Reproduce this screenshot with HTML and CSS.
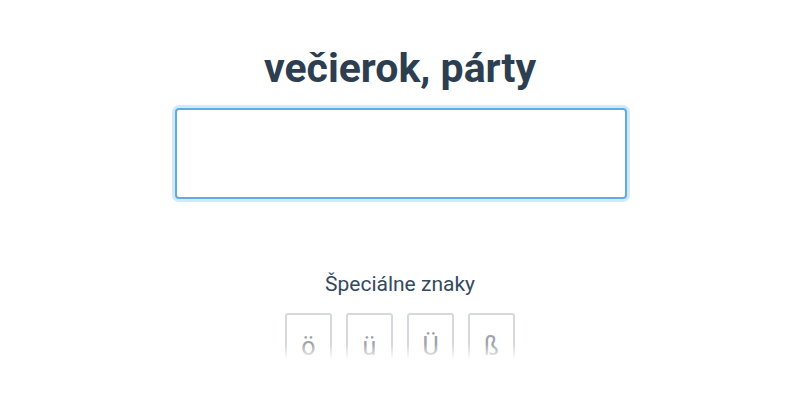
FILE: index.html
```html
<!DOCTYPE html>
<html lang="sk">
    <head>
        <meta charset="UTF-8" />
        <meta name="viewport" content="width=device-width, initial-scale=1.0" />
        <title>večierok, párty</title>
        <link rel="stylesheet" href="styles.css">
    </head>
    <body>
        <main class="quiz">
            <h1 class="word">večierok, párty</h1>
            <div class="answer">
                <input class="answer-input" type="text" autofocus />
            </div>
            <div class="special">
                <div class="special-title">Špeciálne znaky</div>
                <div class="keys">
                    <button class="key">ö</button>
                    <button class="key">ü</button>
                    <button class="key">Ü</button>
                    <button class="key">ß</button>
                </div>
            </div>
        </main>
        <div class="fade"></div>
    </body>
</html>
```

FILE: styles.css
```css
html, body {
    margin: 0;
    height: 100%;
    overflow: hidden;
    background: white;
    font-family: Roboto, "Liberation Sans", sans-serif;
}
.quiz {
    display: flex;
    flex-direction: column;
    align-items: center;
    padding-top: 40px;
}
.word {
    margin: 0;
    font-size: 41px;
    font-weight: 700;
    line-height: 56px;
    color: #2c3e50;
}
.answer {
    margin-top: 12px;
    padding-left: 2px;
}
.answer-input {
    box-sizing: border-box;
    width: 452px;
    height: 91px;
    border: 2px solid #5dade2;
    border-radius: 4px;
    box-shadow: 0 0 0 3px #d4e9f8;
    outline: none;
    font-size: 28px;
    font-family: inherit;
    text-align: center;
}
.special {
    margin-top: 73px;
    display: flex;
    flex-direction: column;
    align-items: center;
}
.special-title {
    font-size: 21px;
    line-height: 24px;
    color: #34495e;
}
.keys {
    display: flex;
    gap: 14px;
    margin-top: 17px;
}
.key {
    box-sizing: border-box;
    width: 47px;
    height: 66px;
    padding: 0;
    border: 2px solid #d5d8dc;
    border-radius: 3px;
    background: white;
    color: #9ea3a8;
    font-family: inherit;
    font-size: 25px;
}
.fade {
    position: fixed;
    left: 0;
    right: 0;
    bottom: 0;
    height: 56px;
    background: linear-gradient(to bottom, rgba(255,255,255,0) 0, white 16px);
}
```
